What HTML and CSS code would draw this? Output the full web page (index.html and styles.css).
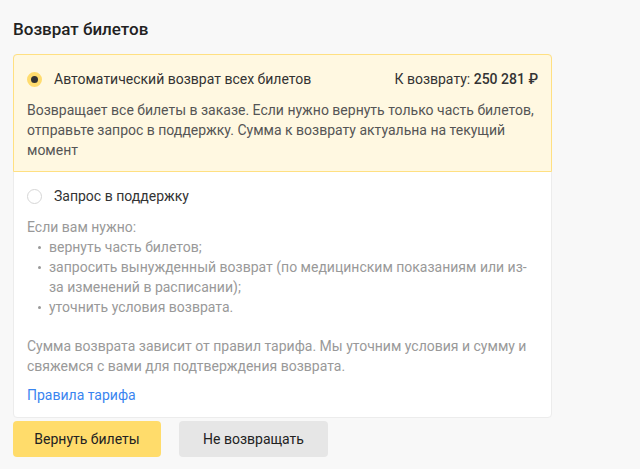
FILE: index.html
```html
<!DOCTYPE html>
<html lang="ru">
<head>
    <meta charset="UTF-8">
    <meta name="viewport" content="width=device-width, initial-scale=1.0">
    <title>Возврат билетов</title>
    <link rel="stylesheet" href="styles.css">
</head>
<body>
    <h1 class="title">Возврат билетов</h1>

    <!-- Refund options -->
    <div class="refund-card">
        <div class="option option-active">
            <div class="option-head">
                <span class="radio radio-checked"></span>
                <span class="option-label">Автоматический возврат всех билетов</span>
                <span class="option-sum">К возврату: <b>250 281 ₽</b></span>
            </div>
            <p class="option-text">
                Возвращает все билеты в заказе. Если нужно вернуть только часть билетов,
                отправьте запрос в поддержку. Сумма к возврату актуальна на текущий
                момент
            </p>
        </div>

        <div class="option">
            <div class="option-head">
                <span class="radio"></span>
                <span class="option-label">Запрос в поддержку</span>
            </div>
            <div class="option-text muted">
                Если вам нужно:
                <ul class="reasons">
                    <li>вернуть часть билетов;</li>
                    <li>запросить вынужденный возврат (по медицинским показаниям или из-за изменений в расписании);</li>
                    <li>уточнить условия возврата.</li>
                </ul>
            </div>
            <p class="option-text muted note">
                Сумма возврата зависит от правил тарифа. Мы уточним условия и сумму и
                свяжемся с вами для подтверждения возврата.
            </p>
            <a href="#" class="rules-link">Правила тарифа</a>
        </div>
    </div>

    <!-- Actions -->
    <div class="actions">
        <button class="btn btn-primary">Вернуть билеты</button>
        <button class="btn btn-secondary">Не возвращать</button>
    </div>
</body>
</html>
```

FILE: styles.css
```css
/* Page */
body {
    margin: 0;
    padding: 17px 13px 0;
    background-color: #f8f8f8;
    font-family: Roboto, "Noto Sans", sans-serif;
    font-size: 14px;
    line-height: 20px;
    color: #333;
}

.title {
    margin: 0 0 13px;
    font-size: 17px;
    line-height: 24px;
    font-weight: 500;
    color: #222;
}

/* Card with the two refund options */
.refund-card {
    width: 539px;
    box-sizing: border-box;
    background-color: #fff;
    border: 1px solid #ececec;
    border-radius: 4px;
}

.option {
    padding: 14px 13px 12px;
}

.option-active {
    margin: -1px -1px 0;
    padding-bottom: 11px;
    background-color: #fff8e1;
    border: 1px solid #ffe082;
    border-radius: 4px 4px 0 0;
}

.option-head {
    display: flex;
    align-items: center;
    gap: 12px;
}

.option-label {
    flex: 1;
}

.option-sum b {
    font-weight: 500;
}

/* Radio circles */
.radio {
    width: 15px;
    height: 15px;
    box-sizing: border-box;
    border-radius: 50%;
    border: 1px solid #d6d6d6;
    background-color: #fff;
    flex-shrink: 0;
}

.radio-checked {
    border: 4px solid #ffdc6e;
    background-color: #333;
}

.option-text {
    margin: 11px 0 0;
    color: #555;
}

.muted {
    color: #999;
}

.reasons {
    margin: 0;
    padding: 0 0 0 11px;
    list-style: none;
}

.reasons li {
    position: relative;
    padding-left: 11px;
}

/* small round bullet */
.reasons li::before {
    content: "";
    position: absolute;
    left: 0;
    top: 9px;
    width: 3px;
    height: 3px;
    border-radius: 50%;
    background-color: #999;
}

.note {
    margin-top: 19px;
}

.rules-link {
    display: inline-block;
    margin-top: 9px;
    color: #3a85f0;
    text-decoration: none;
}

/* Buttons */
.actions {
    display: flex;
    gap: 18px;
    margin-top: 3px;
}

.btn {
    height: 36px;
    width: 148px;
    border: none;
    border-radius: 4px;
    font-family: inherit;
    font-size: 14px;
    color: #222;
}

.btn-primary {
    background-color: #ffdc6b;
}

.btn-secondary {
    width: 149px;
    background-color: #e6e6e6;
}
```
